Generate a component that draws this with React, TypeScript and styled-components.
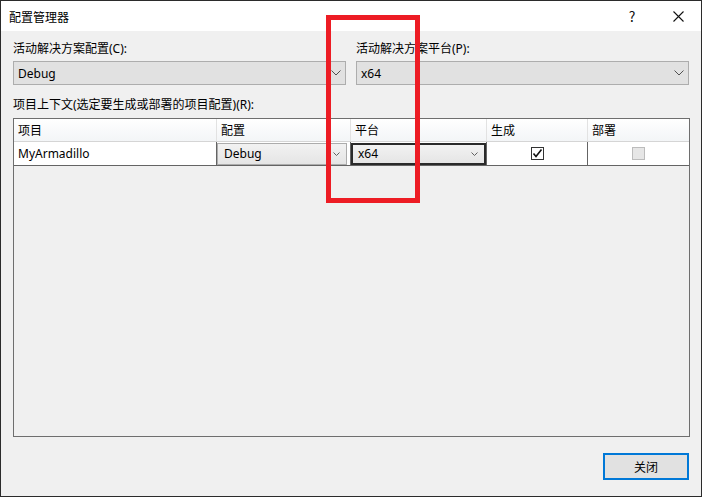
import styled, { createGlobalStyle } from "styled-components";

const GlobalStyle = createGlobalStyle`
  html, body {
    margin: 0;
    padding: 0;
    background: #f0f0f0;
  }
  * {
    box-sizing: border-box;
  }
  body {
    font-family: "Noto Sans", "Noto Sans CJK SC", sans-serif;
    font-size: 12px;
    color: #000;
  }
`;

const Window = styled.div`
  position: relative;
  width: 702px;
  height: 497px;
  border: 1px solid #2b2b2b;
  background: #f0f0f0;
  display: flex;
  flex-direction: column;
`;

const TitleBar = styled.div`
  height: 30px;
  background: #fff;
  display: flex;
  align-items: center;
  padding-left: 8px;
  font-family: "Noto Sans CJK SC", sans-serif;
`;

const TitleText = styled.div`
  flex: 1;
  font-size: 12px;
`;

const TitleButton = styled.div<{ $width: number }>`
  width: ${(p) => p.$width}px;
  height: 30px;
  display: flex;
  align-items: center;
  justify-content: center;
  font-size: 14px;
  color: #111;
`;

const Body = styled.div`
  flex: 1;
  display: flex;
  flex-direction: column;
  padding: 10px 11px 15px 12px;
`;

const TopRow = styled.div`
  display: grid;
  grid-template-columns: 333px 333px;
  column-gap: 10px;
`;

const Field = styled.div`
  display: flex;
  flex-direction: column;
`;

const Label = styled.div`
  height: 16px;
  line-height: 16px;
  margin-bottom: 4px;
  font-family: "Noto Sans", "Noto Sans CJK SC", sans-serif;
  white-space: nowrap;
`;

const Combo = styled.div`
  height: 24px;
  border: 1px solid #adadad;
  background: #e1e1e1;
  display: flex;
  align-items: center;
  justify-content: space-between;
  padding: 0 4px 0 4px;
`;

const ContextLabel = styled(Label)`
  margin-top: 12px;
  margin-bottom: 5px;
`;

const Grid = styled.div`
  width: 677px;
  height: 319px;
  border: 1px solid #6e6e6e;
  background: #f0f0f0;
`;

const GridRow = styled.div<{ $header?: boolean }>`
  display: grid;
  grid-template-columns: 203px 134px 136px 101px 101px;
  height: ${(p) => (p.$header ? 23 : 24)}px;
  background: ${(p) =>
    p.$header ? "linear-gradient(#ffffff, #f3f5f7)" : "#ffffff"};
  border-bottom: 1px solid ${(p) => (p.$header ? "#d5d5d5" : "#646464")};
`;

const Cell = styled.div<{ $header?: boolean; $last?: boolean; $center?: boolean }>`
  display: flex;
  align-items: center;
  justify-content: ${(p) => (p.$center ? "center" : "flex-start")};
  padding-left: ${(p) => (p.$center ? 0 : 4)}px;
  border-right: ${(p) =>
    p.$last ? "none" : `1px solid ${p.$header ? "#e2e2e2" : "#646464"}`};
  font-family: "Noto Sans", "Noto Sans CJK SC", sans-serif;
`;

const CellCombo = styled.div<{ $selected?: boolean }>`
  width: ${(p) => (p.$selected ? "135px" : "130px")};
  height: 22px;
  margin-left: -4px;
  border: ${(p) => (p.$selected ? "2px solid #2a2a2a" : "1px solid #acacac")};
  background: linear-gradient(#f2f2f2, #e5e5e5);
  display: flex;
  align-items: center;
  justify-content: space-between;
  padding: 0 6px 0 ${(p) => (p.$selected ? 5 : 6)}px;
`;

const Check = styled.div<{ $disabled?: boolean }>`
  width: 13px;
  height: 13px;
  border: 1px solid ${(p) => (p.$disabled ? "#bcbcbc" : "#333")};
  background: ${(p) => (p.$disabled ? "#e6e6e6" : "#fff")};
  display: flex;
  align-items: center;
  justify-content: center;
`;

const Footer = styled.div`
  width: 677px;
  display: flex;
  justify-content: flex-end;
  margin-top: 16px;
`;

const Button = styled.button`
  width: 86px;
  height: 27px;
  margin-right: 1px;
  border: 2px solid #0078d7;
  background: #e1e1e1;
  font-family: "Noto Sans CJK SC", sans-serif;
  font-size: 12px;
  color: #000;
  padding: 0;
`;

const Highlight = styled.div`
  position: absolute;
  left: 325px;
  top: 14px;
  width: 94px;
  height: 188px;
  border: 5px solid #ed1c24;
  pointer-events: none;
`;

function Chevron({ size = "big" }: { size?: "big" | "small" }) {
  if (size === "small") {
    return (
      <svg width="7" height="4" viewBox="0 0 7 4">
        <path d="M0.5 0.5 L3.5 3.5 L6.5 0.5" fill="none" stroke="#606060" strokeWidth="1" />
      </svg>
    );
  }
  return (
    <svg width="10" height="6" viewBox="0 0 10 6">
      <path d="M0.5 0.5 L5 5 L9.5 0.5" fill="none" stroke="#505050" strokeWidth="1" />
    </svg>
  );
}

export default function App() {
  return (
    <>
      <GlobalStyle />
      <Window>
        <TitleBar>
          <TitleText>配置管理器</TitleText>
          <TitleButton $width={46}>?</TitleButton>
          <TitleButton $width={46}>
            <svg width="11" height="11" viewBox="0 0 11 11">
              <path d="M0.5 0.5 L10.5 10.5 M10.5 0.5 L0.5 10.5" stroke="#111" strokeWidth="1.1" />
            </svg>
          </TitleButton>
        </TitleBar>
        <Body>
          <TopRow>
            <Field>
              <Label>活动解决方案配置(C):</Label>
              <Combo>
                <span>Debug</span>
                <Chevron />
              </Combo>
            </Field>
            <Field>
              <Label>活动解决方案平台(P):</Label>
              <Combo>
                <span>x64</span>
                <Chevron />
              </Combo>
            </Field>
          </TopRow>
          <ContextLabel>项目上下文(选定要生成或部署的项目配置)(R):</ContextLabel>
          <Grid>
            <GridRow $header>
              <Cell $header>项目</Cell>
              <Cell $header>配置</Cell>
              <Cell $header>平台</Cell>
              <Cell $header>生成</Cell>
              <Cell $header $last>部署</Cell>
            </GridRow>
            <GridRow>
              <Cell>MyArmadillo</Cell>
              <Cell>
                <CellCombo>
                  <span>Debug</span>
                  <Chevron size="small" />
                </CellCombo>
              </Cell>
              <Cell>
                <CellCombo $selected>
                  <span>x64</span>
                  <Chevron size="small" />
                </CellCombo>
              </Cell>
              <Cell $center>
                <Check>
                  <svg width="11" height="11" viewBox="0 0 11 11">
                    <path d="M1.5 5.5 L4 8.5 L9.5 1.5" fill="none" stroke="#111" strokeWidth="1.6" />
                  </svg>
                </Check>
              </Cell>
              <Cell $center $last>
                <Check $disabled />
              </Cell>
            </GridRow>
          </Grid>
          <Footer>
            <Button>关闭</Button>
          </Footer>
        </Body>
        <Highlight />
      </Window>
    </>
  );
}
